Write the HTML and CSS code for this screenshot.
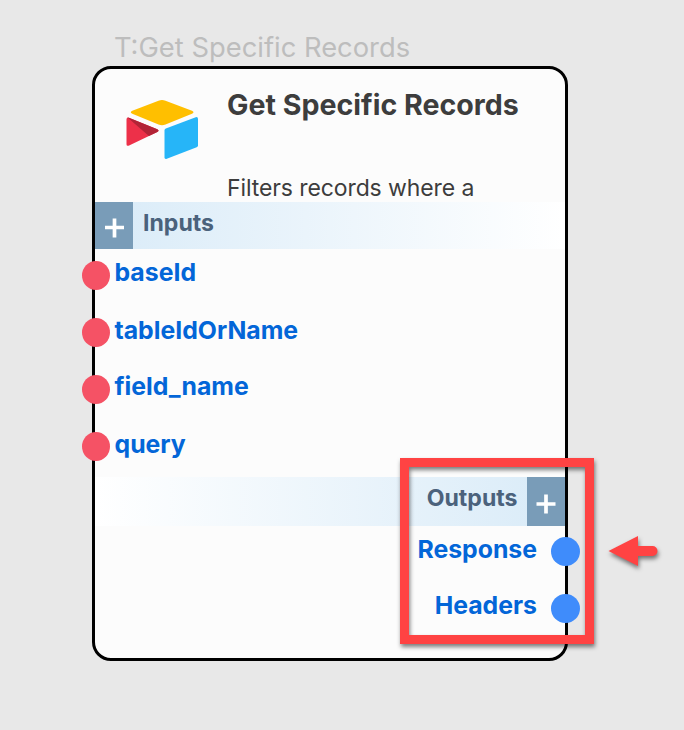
FILE: index.html
```html
<!DOCTYPE html>
<html lang="en">
<head>
<meta charset="utf-8">
<title>Get Specific Records</title>
<link rel="stylesheet" href="styles.css">
</head>
<body>
<main class="canvas">
  <div class="node-label"><span>T:Get Specific Records</span></div>
  <section class="node">
    <header class="node-header">
      <svg class="logo" width="74" height="62" viewBox="0 0 74 62">
        <path fill="#ffbf00" d="M32.500 2.700Q36 1.300 39.500 2.700L66 12.800Q69 14.300 66 15.800L39.500 26.500Q36 27.800 32.500 26.500L6.300 15.800Q3.300 14.300 6.300 12.800Z"/>
        <path fill="#26b5f8" d="M38.500 32.500Q38.500 31 39.800 30.400L69.700 19.200Q72 18.700 72 21V47.300Q72 48.600 70.700 49.200L40.800 60.800Q38.500 61.500 38.500 59.500Z"/>
        <path fill="#ed3049" d="M.5 21.500Q.6 18.800 3 19.800L31.300 31.200Q33.800 32.500 31.300 34L3.100 47.500Q.5 48.500 .5 46.300Z"/>
        <path fill="#b22437" d="M1.500 19.600Q2.200 19.300 3.500 20L31.300 31.200Q33.800 32.500 31.300 34L22.900 38Z"/>
      </svg>
      <div class="summary">
        <h1>Get Specific Records</h1>
        <p>Filters records where a</p>
      </div>
    </header>
    <div class="band band-inputs">
      <button class="add" aria-label="Add input"><svg width="20" height="20" viewBox="0 0 20 20"><path d="M10.500 .5V19.500M1 9.500H20"/></svg></button>
      <span class="band-title">Inputs</span>
    </div>
    <ul class="ports inputs">
      <li><i class="dot"></i><span>baseId</span></li>
      <li><i class="dot"></i><span>tableIdOrName</span></li>
      <li><i class="dot"></i><span>field_name</span></li>
      <li><i class="dot"></i><span>query</span></li>
    </ul>
    <div class="band band-outputs">
      <span class="band-title">Outputs</span>
      <button class="add" aria-label="Add output"><svg width="20" height="20" viewBox="0 0 20 20"><path d="M10 .5V19.500M.5 10H19.500"/></svg></button>
    </div>
    <ul class="ports outputs">
      <li><span>Response</span><i class="dot"></i></li>
      <li><span>Headers</span><i class="dot"></i></li>
    </ul>
  </section>
  <div class="highlight"></div>
  <svg class="arrow" width="60" height="44" viewBox="0 0 60 44">
    <path fill="#ff4343" d="M3.500 16L33 1V11H47.500A5 5 0 0 1 47.500 21H33V31Z"/>
  </svg>
</main>
</body>
</html>
```
FILE: styles.css
```css
* { box-sizing: border-box; }

body {
  margin: 0;
  background: #e8e8e8;
  font-family: Inter, "Liberation Sans", sans-serif;
}

.canvas {
  position: relative;
  width: 684px;
  height: 730px;
  padding: 29px 116px 0 92px;
  overflow: hidden;
}

.node-label {
  height: 37px;
  padding-left: 22px;
  font-size: 27.35px;
  line-height: 38px;
  white-space: nowrap;
  color: #bdbdbd;
}

.node {
  display: grid;
  grid-template-rows: 133px 47px 228px 49px 1fr;
  width: 476px;
  height: 595px;
  border: 3px solid #000;
  border-radius: 19px;
  background: #fcfcfc;
}

.node-header {
  display: flex;
  gap: 27px;
  padding-left: 31px;
  white-space: nowrap;
}

.logo { margin-top: 29px; }

.summary {
  display: flex;
  flex-direction: column;
  justify-content: space-between;
  color: #3d3d3d;
}

h1 {
  margin: 18px 0 0;
  font-size: 28.6px;
  font-weight: 700;
  line-height: 36px;
}

p {
  margin: 0;
  font-size: 23px;
  line-height: 28px;
  letter-spacing: -.1px;
}

.band {
  display: flex;
  align-items: stretch;
}

.band-inputs { background: linear-gradient(90deg, #d9ebf8, #fff); }

.band-outputs {
  justify-content: flex-end;
  background: linear-gradient(270deg, #d9ebf8, #fff);
}

.band-title {
  padding: 0 9.5px 0 10px;
  font-size: 23.1px;
  font-weight: 700;
  line-height: 43px;
  color: #4b627c;
}

.add {
  display: flex;
  align-items: center;
  justify-content: center;
  width: 38px;
  padding: 4px 0 0;
  border: 0;
  background: #799cb8;
}

.add path {
  stroke: #fff;
  stroke-width: 3.7;
}

.ports {
  margin: 0;
  padding: 0;
  list-style: none;
  font-size: 24.8px;
  font-weight: 700;
  color: #0366d8;
}

.ports li {
  display: flex;
  align-items: flex-start;
  gap: 4.5px;
  height: 57px;
  padding-top: 12px;
}

.ports span { line-height: 23px; }

.inputs li:nth-child(even) span { line-height: 25px; }

.dot {
  width: 28px;
  height: 29px;
  border-radius: 50%;
  background: #f55265;
}

.inputs .dot { margin-left: -13px; }

.outputs li {
  justify-content: flex-end;
  gap: 14px;
  padding-top: 11px;
}

.outputs li:first-child span { line-height: 24px; }

.outputs li:last-child span { line-height: 22px; }

.outputs .dot {
  width: 29px;
  height: 29px;
  margin-right: -15px;
  background: #3f8cfb;
}

.highlight {
  position: absolute;
  left: 400px;
  top: 458px;
  width: 194px;
  height: 186px;
  border: 9px solid #ff4343;
  filter: drop-shadow(1px 3px 2px rgba(0, 0, 0, .5));
}

.arrow {
  position: absolute;
  left: 604.5px;
  top: 535px;
  filter: drop-shadow(1px 3px 2px rgba(0, 0, 0, .5));
}
```
